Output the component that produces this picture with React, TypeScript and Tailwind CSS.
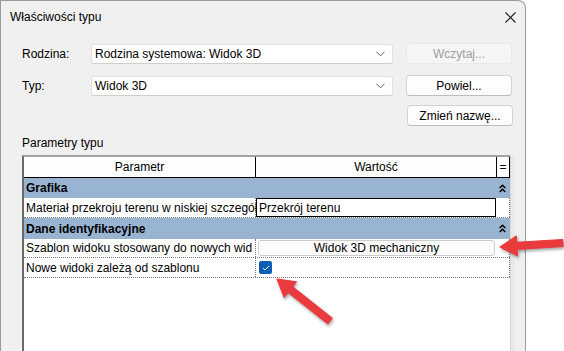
import React from "react";

const font = "font-['Liberation_Sans',Arial,sans-serif]";

function Chevron() {
  return (
    <svg width="9" height="6" viewBox="0 0 9 6">
      <path d="M0.5 0.8 L4.5 4.8 L8.5 0.8" fill="none" stroke="#5f5f5f" strokeWidth="1" />
    </svg>
  );
}

function Collapse() {
  return (
    <svg width="7" height="9" viewBox="0 0 7 9">
      <path
        d="M0.7 4 L3.5 1.2 L6.3 4 M0.7 8 L3.5 5.2 L6.3 8"
        fill="none"
        stroke="#000"
        strokeWidth="1.5"
      />
    </svg>
  );
}

function Combo({ text }: { text: string }) {
  return (
    <div className="flex h-[20px] w-[302px] items-center justify-between rounded-[3px] border border-[#e2e2e2] border-b-[#cfcfcf] bg-white pl-[3px] pr-[7px]">
      <span>{text}</span>
      <Chevron />
    </div>
  );
}

function Button({ label, disabled }: { label: string; disabled?: boolean }) {
  return (
    <div
      className={
        disabled
          ? "flex h-[21px] w-[106px] items-center justify-center rounded-[4px] border border-[#e9e9e9] bg-[#f5f5f5] text-[#9d9d9d]"
          : "flex h-[21px] w-[106px] items-center justify-center rounded-[4px] border border-[#d3d3d3] border-b-[#bdbdbd] bg-[#fdfdfd] text-black"
      }
    >
      {label}
    </div>
  );
}

// arrow drawn pointing from tail to tip
function Arrow({ tip, tail }: { tip: [number, number]; tail: [number, number] }) {
  const dx = tail[0] - tip[0];
  const dy = tail[1] - tip[1];
  const len = Math.sqrt(dx * dx + dy * dy);
  const angle = (Math.atan2(dy, dx) * 180) / Math.PI;
  const h = 17;
  const hw = 10;
  const sw = 3.6;
  const pts = `0,0 ${h},${-hw} ${h},${-sw} ${len},${-sw} ${len},${sw} ${h},${sw} ${h},${hw}`;
  return (
    <g transform={`translate(${tip[0]} ${tip[1]}) rotate(${angle})`}>
      <polygon points={pts} fill="#ea3a3e" strokeLinejoin="round" stroke="#ea3a3e" strokeWidth="1" />
    </g>
  );
}

export default function App() {
  return (
    <div className={`relative flex h-[351px] w-[564px] overflow-hidden bg-white text-[12px] text-black ${font}`}>
      <div className="flex h-full w-[526px] flex-col rounded-tr-[8px] border-l border-r border-t border-[#9a9a9a] bg-[#f0f0f0]">
        {/* title bar */}
        <div className="flex h-[32px] shrink-0 items-center justify-between pl-[9px] pr-[9px]">
          <span className="text-[12px]">Właściwości typu</span>
          <svg width="11" height="11" viewBox="0 0 11 11">
            <path d="M0.5 0.5 L10.5 10.5 M10.5 0.5 L0.5 10.5" stroke="#1a1a1a" strokeWidth="1.1" />
          </svg>
        </div>

        <div className="flex min-h-0 flex-1 flex-col pl-[21px] pr-[12px]">
          <div className="mt-[10px] flex items-center">
            <span className="w-[69px]">Rodzina:</span>
            <Combo text="Rodzina systemowa: Widok 3D" />
            <div className="ml-[13px]">
              <Button label="Wczytaj..." disabled />
            </div>
          </div>
          <div className="mt-[11px] flex items-center">
            <span className="w-[69px]">Typ:</span>
            <Combo text="Widok 3D" />
            <div className="ml-[13px]">
              <Button label="Powiel..." />
            </div>
          </div>
          <div className="mt-[9px] flex justify-end">
            <Button label="Zmień nazwę..." />
          </div>

          <div className="mt-[10px] h-[14px] leading-[14px]">Parametry typu</div>

          {/* table */}
          <div className="mt-[5px] flex min-h-0 w-[493px] flex-1">
            <div className="flex w-[488px] flex-col border-l-2 border-t-2 border-l-[#6b6b6b] border-t-[#a3a3a3] bg-white">
              <div className="flex h-[21px] shrink-0 border-b border-black bg-[#fdfdfd]">
                <div className="flex w-[232px] items-center justify-center border-r border-black">Parametr</div>
                <div className="flex w-[241px] items-center justify-center border-r border-black">Wartość</div>
                <div className="flex w-[13px] items-center justify-center border-r border-black">=</div>
              </div>

              <div className="flex h-[20px] shrink-0 items-center justify-between bg-[#99b4d1] pl-[2px] pr-[4px] font-bold">
                <span>Grafika</span>
                <Collapse />
              </div>

              <div className="flex h-[20px] shrink-0 border-b border-dotted border-[#7a7a7a]">
                <div className="flex w-[232px] items-center whitespace-nowrap border-r border-dotted border-[#7a7a7a] pl-[2px]">
                  Materiał przekroju terenu w niskiej szczegół
                </div>
                <div className="flex w-[240px] items-center border border-black bg-white pl-[2px]">Przekrój terenu</div>
                <div className="w-[14px] border-r border-dotted border-[#7a7a7a]" />
              </div>

              <div className="flex h-[21px] shrink-0 items-center justify-between bg-[#99b4d1] pl-[2px] pr-[4px] font-bold">
                <span>Dane identyfikacyjne</span>
                <Collapse />
              </div>

              <div className="flex h-[19px] shrink-0 border-b border-dotted border-[#7a7a7a]">
                <div className="flex w-[232px] items-center whitespace-nowrap border-r border-dotted border-[#7a7a7a] pl-[2px]">
                  Szablon widoku stosowany do nowych wid
                </div>
                <div className="flex w-[241px] items-center pl-[2px] pr-[2px]">
                  <div className="flex h-[16px] w-full items-center justify-center rounded-[3px] border border-[#cdcdcd] bg-[#fbfbfb]">
                    Widok 3D mechaniczny
                  </div>
                </div>
                <div className="w-[13px] border-r border-dotted border-[#7a7a7a]" />
              </div>

              <div className="flex h-[20px] shrink-0 border-b border-dotted border-[#7a7a7a]">
                <div className="flex w-[232px] items-center whitespace-nowrap border-r border-dotted border-[#7a7a7a] pl-[2px]">
                  Nowe widoki zależą od szablonu
                </div>
                <div className="flex w-[241px] items-center pl-[3px]">
                  <div className="flex h-[13px] w-[13px] items-center justify-center rounded-[2px] bg-[#0a5fb4]">
                    <svg width="8" height="6" viewBox="0 0 8 6">
                      <path d="M0.8 3 L3 5 L7.2 0.8" fill="none" stroke="#fff" strokeWidth="1" />
                    </svg>
                  </div>
                </div>
                <div className="w-[13px] border-r border-dotted border-[#7a7a7a]" />
              </div>
              <div className="flex-1" />
            </div>
            <div className="w-[5px] border-l border-[#d6d6d6] bg-[#e9e9e9]" />
          </div>
        </div>
      </div>

      <svg
        className="pointer-events-none absolute left-0 top-0 drop-shadow-[1px_2px_1.5px_rgba(0,0,0,0.35)]"
        width="564"
        height="351"
      >
        <Arrow tip={[500, 247]} tail={[563, 243]} />
        <Arrow tip={[277, 279]} tail={[330, 321]} />
      </svg>
    </div>
  );
}
